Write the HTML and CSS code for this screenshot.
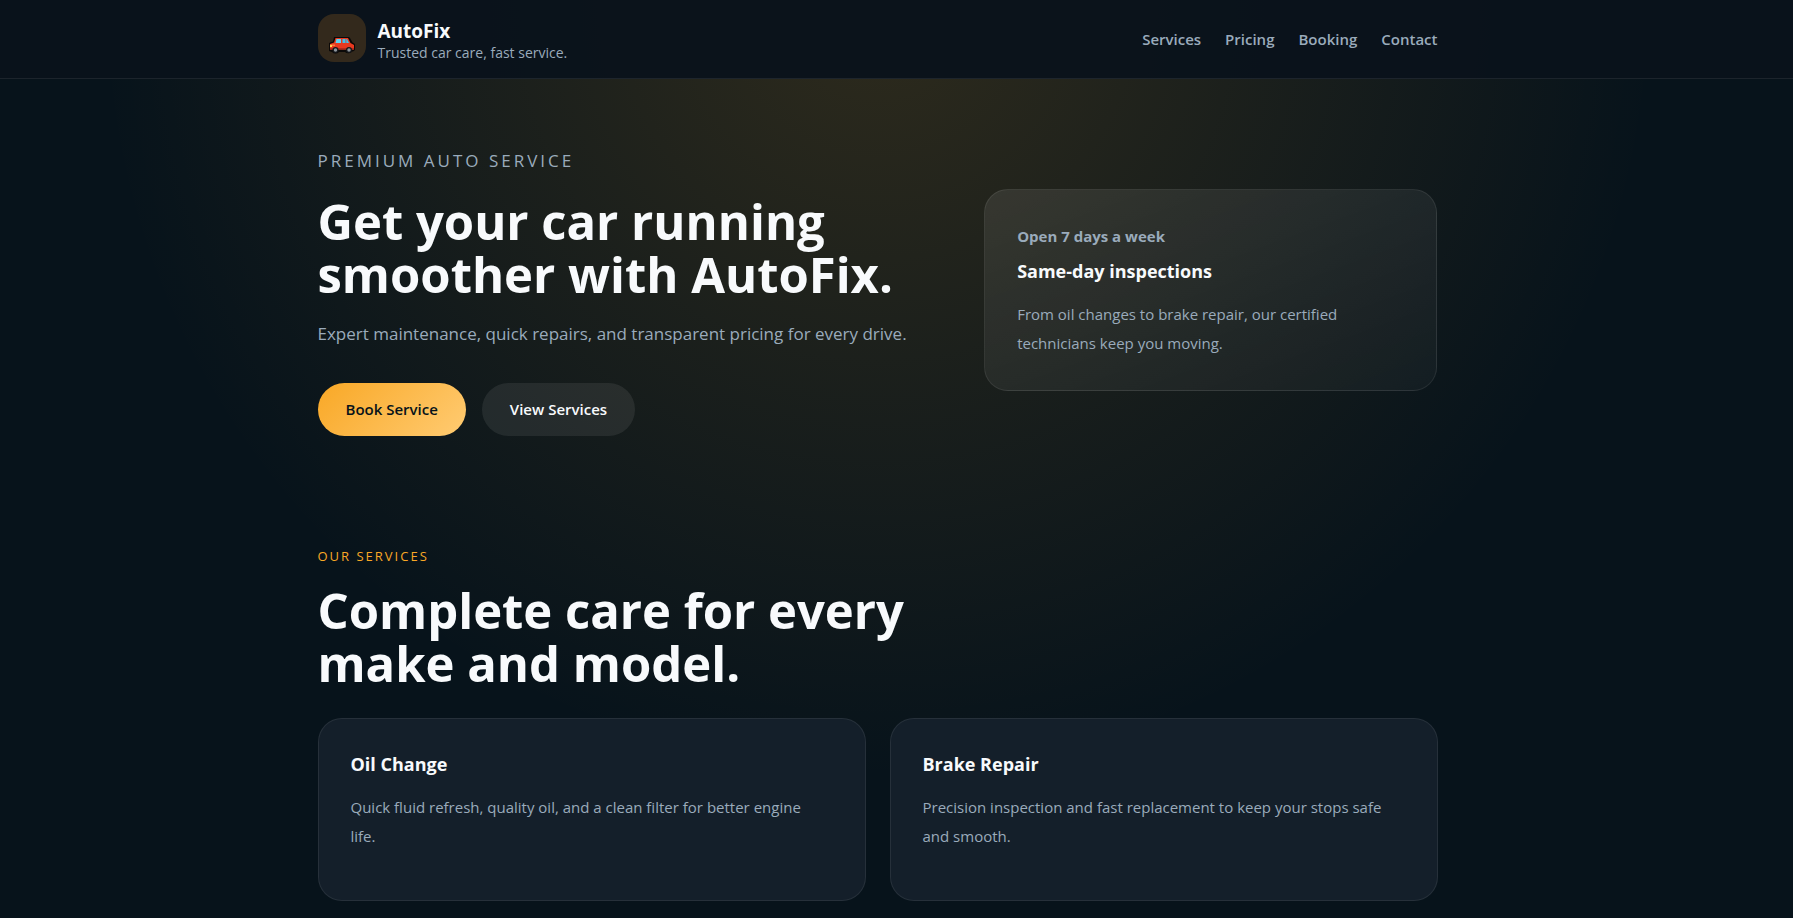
FILE: index.html
```html
<!DOCTYPE html>
<html lang="en">
<head>
<meta charset="utf-8">
<meta name="viewport" content="width=device-width, initial-scale=1">
<title>AutoFix</title>
<link rel="stylesheet" href="styles.css">
</head>
<body>
<header class="site-header">
  <div class="container header-inner">
    <div class="brand">
      <span class="brand-mark">
        <svg class="brand-icon" viewBox="0 0 28 18" aria-hidden="true">
          <path d="M6 1h15l1 1 2.500 4.500L27 8v6l-2 1.500h-1A4 3 0 0 1 17 16h-6a4 3 0 0 1-7 0L1 15V7l4-1.500L6 1z" fill="#0b0908"/>
          <path d="M7.500 2h12.500l2.500 5L26 9v4.500H2V8l4-1.500z" fill="#e8391f"/>
          <path d="M2 8.500h5v1.500H2z" fill="#ff7a3c"/>
          <path d="M2 12h24v1.500H2z" fill="#b52a1c"/>
          <path d="M8.500 3H13v4H7.500z" fill="#5fd2f2"/>
          <path d="M14.500 3H19l2 4h-6.500z" fill="#42bfe8"/>
          <path d="M17.500 3h.8v4h-.8z" fill="#d8432c"/>
          <path d="M2 9h2v2H2z" fill="#ffd34d"/>
          <circle cx="7.500" cy="14" r="3" fill="#16181b"/>
          <circle cx="7.500" cy="14" r="1.700" fill="#8d949b"/>
          <circle cx="21" cy="14" r="3" fill="#16181b"/>
          <circle cx="21" cy="14" r="1.700" fill="#8d949b"/>
        </svg>
      </span>
      <div>
        <div class="brand-name">AutoFix</div>
        <div class="brand-tagline">Trusted car care, fast service.</div>
      </div>
    </div>
    <nav class="nav" aria-label="Main">
      <a href="#services">Services</a>
      <a href="#pricing">Pricing</a>
      <a href="#booking">Booking</a>
      <a href="#contact">Contact</a>
    </nav>
  </div>
</header>
<main>
  <section class="hero">
    <div class="container hero-grid">
      <div class="hero-copy">
        <p class="hero-eyebrow">Premium auto service</p>
        <h1 class="headline">Get your car running smoother with AutoFix.</h1>
        <p class="lead">Expert maintenance, quick repairs, and transparent pricing for every drive.</p>
        <div class="actions">
          <button type="button" class="button button-primary">Book Service</button>
          <button type="button" class="button button-secondary">View Services</button>
        </div>
      </div>
      <aside class="panel">
        <p class="panel-label">Open 7 days a week</p>
        <h2 class="card-title">Same-day inspections</h2>
        <p class="card-text">From oil changes to brake repair, our certified technicians keep you moving.</p>
      </aside>
    </div>
  </section>
  <section class="services" id="services">
    <div class="container">
      <p class="section-eyebrow">Our services</p>
      <h2 class="headline section-headline">Complete care for every make and model.</h2>
      <div class="cards">
        <article class="card">
          <h3 class="card-title">Oil Change</h3>
          <p class="card-text">Quick fluid refresh, quality oil, and a clean filter for better engine life.</p>
        </article>
        <article class="card">
          <h3 class="card-title">Brake Repair</h3>
          <p class="card-text">Precision inspection and fast replacement to keep your stops safe and smooth.</p>
        </article>
      </div>
    </div>
  </section>
</main>
</body>
</html>
```

FILE: styles.css
```css
:root {
  --bg: #07131b;
  --text: #f8fafc;
  --muted: #9aabbb;
  --accent: #f9a826;
  --line: rgba(255, 255, 255, 0.08);
  --gutter-end: 38px;
}

* {
  box-sizing: border-box;
  margin: 0;
}

body {
  min-height: 100vh;
  background:
    radial-gradient(circle 780px at calc(50% - 19px) 0, rgba(249, 168, 37, 0.16), rgba(249, 168, 37, 0)) no-repeat,
    var(--bg);
  color: var(--text);
  font-family: "Segoe UI", "Open Sans", "Noto Sans", sans-serif;
  font-size: 15px;
}

.container {
  width: 100%;
  max-width: 1120px;
  margin: 0 auto;
}

.site-header,
.hero,
.services {
  padding-right: var(--gutter-end);
}

.site-header {
  background: rgba(10, 18, 28, 0.94);
  border-bottom: 1px solid var(--line);
}

.header-inner {
  display: flex;
  align-items: center;
  justify-content: space-between;
  padding: 14px 0 16px;
}

.brand {
  display: flex;
  align-items: flex-end;
  gap: 12px;
}

.brand-mark {
  display: flex;
  align-items: flex-end;
  justify-content: center;
  width: 48px;
  height: 48px;
  padding-bottom: 8px;
  border-radius: 16px;
  background: #33291c;
}

.brand-icon {
  width: 28px;
  height: 18px;
}

.brand-name {
  font-size: 19px;
  font-weight: 700;
  line-height: 26px;
}

.brand-tagline {
  color: var(--muted);
  font-size: 14px;
  line-height: 18px;
}

.nav {
  display: flex;
  gap: 24px;
  padding-top: 2px;
}

.nav a {
  color: var(--muted);
  font-weight: 600;
  line-height: 20px;
  text-decoration: none;
}

.hero {
  padding-top: 64px;
}

.hero-grid {
  display: grid;
  grid-template-columns: 1.4fr 1fr;
  gap: 32px;
  align-items: center;
}

.hero-eyebrow {
  color: var(--muted);
  font-size: 17px;
  letter-spacing: 3px;
  line-height: 36px;
  text-transform: uppercase;
}

.headline {
  font-size: 49px;
  font-weight: 700;
  line-height: 53px;
}

.hero-copy .headline {
  margin-top: 16px;
}

.lead {
  margin-top: 16px;
  color: var(--muted);
  font-size: 17px;
  line-height: 34px;
}

.actions {
  display: flex;
  gap: 16px;
  margin-top: 32px;
}

.button {
  padding: 16px 28px;
  border: 0;
  border-radius: 27px;
  font: inherit;
  font-weight: 600;
  line-height: 21px;
  cursor: pointer;
}

.button-primary {
  background: linear-gradient(135deg, var(--accent), #ffcb72);
  color: #07131a;
}

.button-secondary {
  background: rgba(255, 255, 255, 0.08);
  color: var(--text);
}

.panel {
  padding: 32px;
  border: 1px solid var(--line);
  border-radius: 24px;
  background: linear-gradient(160deg, rgba(255, 255, 255, 0.09), rgba(255, 255, 255, 0.03));
}

.panel-label {
  margin-bottom: 8px;
  color: var(--muted);
  font-weight: 700;
  line-height: 28px;
}

.card-title {
  margin-bottom: 16px;
  font-size: 18px;
  font-weight: 700;
  line-height: 26px;
}

.card-text {
  max-width: 472px;
  color: var(--muted);
  line-height: 29px;
}

.services {
  padding-top: 108px;
  padding-bottom: 16px;
}

.section-eyebrow {
  margin-bottom: 16px;
  color: var(--accent);
  font-size: 13px;
  letter-spacing: 2px;
  line-height: 24px;
  text-transform: uppercase;
}

.section-headline {
  max-width: 660px;
  margin-bottom: 28px;
}

.cards {
  display: grid;
  grid-template-columns: 1fr 1fr;
  gap: 24px;
}

.card {
  min-height: 183px;
  padding: 32px;
  border: 1px solid var(--line);
  border-radius: 24px;
  background: #141f2a;
}
```
